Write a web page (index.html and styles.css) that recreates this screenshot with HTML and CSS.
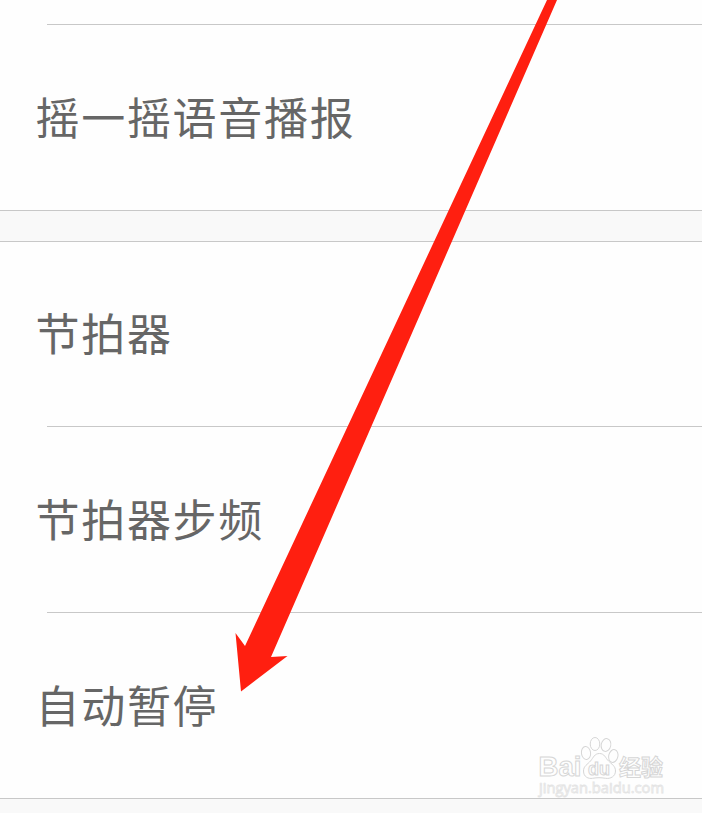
FILE: index.html
```html
<!DOCTYPE html>
<html lang="zh-CN">
<head>
    <meta charset="UTF-8">
    <meta name="viewport" content="width=device-width, initial-scale=1.0">
    <title>设置</title>
    <link rel="stylesheet" href="styles.css">
</head>
<body>
    <div class="settings">
        <ul class="settings-group">
            <li class="row row-cut"></li>
            <li class="row">摇一摇语音播报</li>
        </ul>

        <ul class="settings-group">
            <li class="row row-first">节拍器</li>
            <li class="row">节拍器步频</li>
            <li class="row">自动暂停</li>
        </ul>
    </div>

    <!-- Arrow pointing to the auto pause row -->
    <svg class="arrow" width="702" height="813" viewBox="0 0 702 813">
        <polygon points="547,0 557,0 271,657 287.5,656 241,691.5 235.5,633 245,646" />
    </svg>

    <svg class="watermark" width="150" height="70" viewBox="0 0 150 70">
        <text class="brand" x="6.5" y="40" textLength="43" lengthAdjust="spacingAndGlyphs">Bai</text>
        <ellipse cx="54" cy="17" rx="4.6" ry="6.5" transform="rotate(-8 54 17)" />
        <ellipse cx="63" cy="8" rx="4.8" ry="6.5" />
        <ellipse cx="74" cy="9" rx="4.8" ry="6.5" transform="rotate(12 74 9)" />
        <ellipse cx="81.3" cy="20" rx="4.6" ry="6.5" transform="rotate(14 81.3 20)" />
        <path d="M67.5 17.5c-5 0-6 4-9 7.5s-7 5-7 10c0 6 5 8 9 7.3c5-.8 8-.8 13 0c5 .8 10-2 10-7.3c0-5-4-7-7-10s-4-7.5-9-7.5z" />
        <text class="du" x="56" y="38.5" textLength="22" lengthAdjust="spacingAndGlyphs">du</text>
        <text class="cn" x="87" y="38.5" textLength="44">经验</text>
        <text class="site" x="7" y="56.5" textLength="125" lengthAdjust="spacingAndGlyphs">jingyan.baidu.com</text>
    </svg>
</body>
</html>
```

FILE: styles.css
```css
body {
    margin: 0;
    height: 813px;
    overflow: hidden;
    position: relative;
    background-color: #f9f9f9;
    font-family: "Noto Sans CJK SC", sans-serif;
}

.settings {
    display: flex;
    flex-direction: column;
    gap: 30px;
}

.settings-group {
    list-style: none;
    margin: 0;
    padding: 0;
    background-color: #fefefe;
    border-bottom: 1px solid #c8c8c8;
}

.settings-group + .settings-group {
    border-top: 1px solid #c8c8c8;
}

.row {
    display: flex;
    align-items: center;
    box-sizing: border-box;
    height: 186px;
    padding-left: 35.5px;
    padding-bottom: 3px;
    color: #666;
    font-size: 44px;
    letter-spacing: 1.7px;
}

.row-cut {
    height: 24px;
}

.row-first {
    height: 184px;
    padding-bottom: 4px;
}

/* Inset divider between the rows of a group */
.row + .row {
    background: linear-gradient(#c8c8c8, #c8c8c8) 47px 0 / 100% 1px no-repeat;
}

.arrow {
    position: absolute;
    top: 0;
    left: 0;
    fill: #ff1f10;
}

.watermark {
    position: absolute;
    left: 532px;
    top: 736px;
    fill: #fefefe;
    stroke: #d6d6d6;
    stroke-width: 1;
}

.brand {
    font: bold 28px "Liberation Sans", sans-serif;
}

.du {
    font: bold 18px "Liberation Sans", sans-serif;
}

.cn {
    font: bold 22px "Noto Sans CJK SC", sans-serif;
}

.site {
    font: 14px "Open Sans", sans-serif;
    stroke: #e4e4e4;
    stroke-width: 0.8;
}
```
